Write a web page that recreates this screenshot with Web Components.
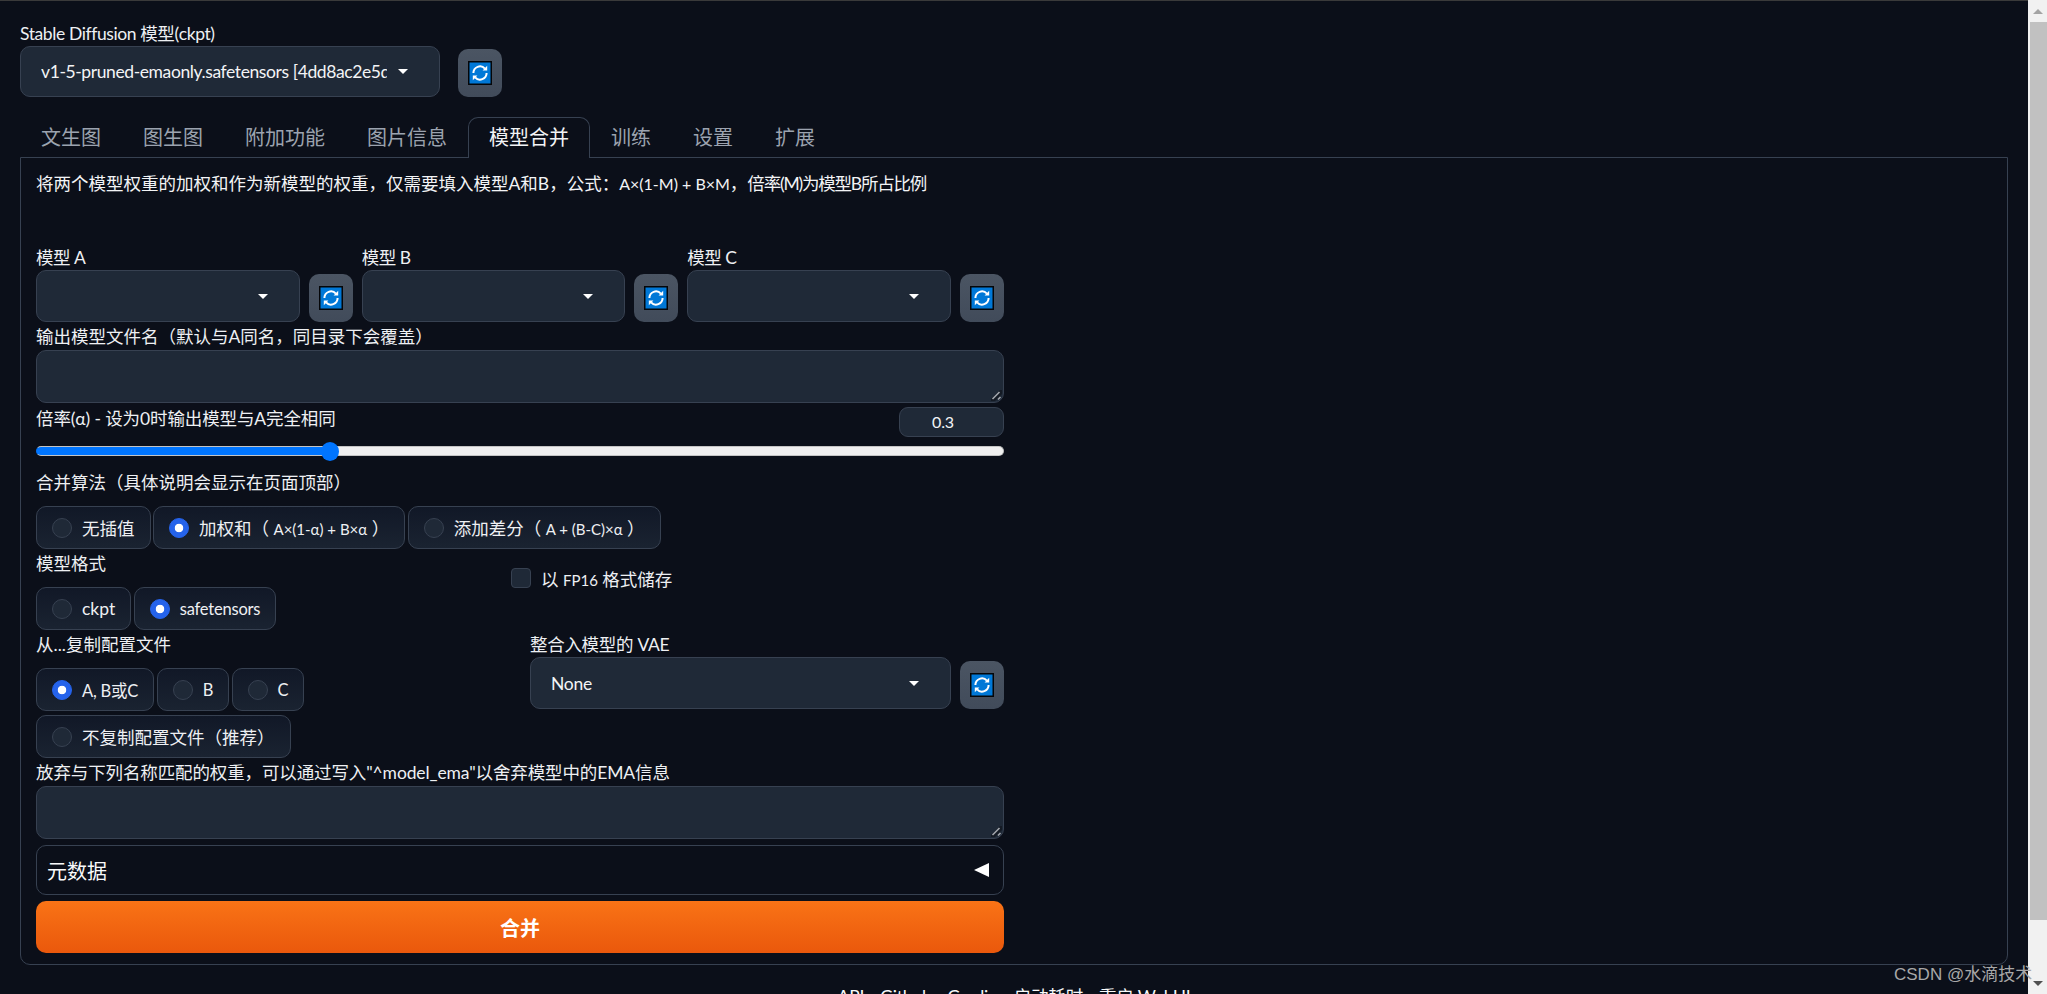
<!DOCTYPE html>
<html lang="zh">
<head>
<meta charset="utf-8">
<title>Stable Diffusion WebUI</title>
<style>
html, body { margin: 0; height: 100%; overflow: hidden; background: #0b0f19; }
body {
    font-family: Lato, "Noto Sans CJK SC", sans-serif;
    font-size: 17.5px;
    color: #eef0f3;
}
</style>
</head>
<body>
<sd-app></sd-app>

<template id="app-tpl">
    <style>
        :host { display: flex; height: 994px; overflow: hidden; position: relative; }
        main {
            flex: 1;
            min-width: 0;
            height: 994px;
            box-sizing: border-box;
            overflow: hidden;
            border-top: 1px solid #3a3a3a;
            padding: 21px 20px 0;
        }
        .top { display: flex; align-items: flex-end; gap: 18px; width: 482px; }
        .top sd-dropdown { flex: 1; min-width: 0; letter-spacing: -0.4px; }
        .desc { line-height: 24px; margin: 0 0 50px; color: #f3f4f6; white-space: nowrap; }
        .desc span { letter-spacing: -1.2px; }
        code { font: inherit; font-size: 16px; }
        .col { width: 968px; }
        .models { display: grid; grid-template-columns: repeat(3, 1fr); gap: 9px; }
        .models sd-dropdown { letter-spacing: -0.5px; }
        .field { display: flex; align-items: flex-end; gap: 9px; }
        .field sd-dropdown { flex: 1; min-width: 0; }
        .format { display: grid; grid-template-columns: 475px 1fr; }
        .format sd-checkbox { margin-top: 17px; }
        .config { display: grid; grid-template-columns: 485px 1fr; gap: 9px; }
        .vae { align-self: start; margin-top: 3px; }
        .vae sd-dropdown { letter-spacing: -0.3px; }
        .mt3 { margin-top: 3px; }
        .mt4 { margin-top: 4px; }
        .mt6 { margin-top: 6px; }
        .mt15 { margin-top: 15px; }
        .tight { letter-spacing: -0.12px; }
        sd-radio-group { margin-top: 3px; }
    </style>
    <main>
        <div class="top">
            <sd-dropdown value="v1-5-pruned-emaonly.safetensors [4dd8ac2e5d]" tall>Stable Diffusion 模型(ckpt)</sd-dropdown>
            <sd-refresh></sd-refresh>
        </div>
        <sd-tabs></sd-tabs>
        <sd-panel>
            <p class="desc">将两个模型权重的加权和作为新模型的权重，仅需要填入模型A和B，公式：<code>A×(1-M) + B×M</code>，<span>倍率(M)为模型B所占比例</span></p>
            <div class="col">
                <div class="models">
                    <div class="field"><sd-dropdown>模型 A</sd-dropdown><sd-refresh></sd-refresh></div>
                    <div class="field"><sd-dropdown>模型 B</sd-dropdown><sd-refresh></sd-refresh></div>
                    <div class="field"><sd-dropdown>模型 C</sd-dropdown><sd-refresh></sd-refresh></div>
                </div>
                <sd-textarea class="mt3">输出模型文件名（默认与A同名，同目录下会覆盖）</sd-textarea>
                <sd-slider class="mt4 tight" value="0.3">倍率(α) - 设为0时输出模型与A完全相同</sd-slider>
                <sd-radio-group class="mt15" label="合并算法（具体说明会显示在页面顶部）" options="无插值|加权和（ <small>A×(1-α) + B×α</small> ）|添加差分（ <small>A + (B-C)×α</small> ）" checked="1"></sd-radio-group>
                <div class="format">
                    <sd-radio-group label="模型格式" options="ckpt|<em>safetensors</em>" checked="1"></sd-radio-group>
                    <sd-checkbox>以 <small>FP16</small> 格式储存</sd-checkbox>
                </div>
                <div class="config">
                    <sd-radio-group label="从...复制配置文件" options="<em>A, B或C</em>|<em>B</em>|<em>C</em>|不复制配置文件（推荐）" checked="0"></sd-radio-group>
                    <div class="field vae">
                        <sd-dropdown value="None">整合入模型的 VAE</sd-dropdown><sd-refresh></sd-refresh>
                    </div>
                </div>
                <sd-textarea class="mt3 tight">放弃与下列名称匹配的权重，可以通过写入"^model_ema"以舍弃模型中的EMA信息</sd-textarea>
                <sd-accordion class="mt6">元数据</sd-accordion>
                <sd-button class="mt6">合并</sd-button>
            </div>
        </sd-panel>
        <sd-footer></sd-footer>
    </main>
    <sd-scrollbar></sd-scrollbar>
    <sd-watermark>CSDN @水滴技术</sd-watermark>
</template>

<script>
function define(name, html, init) {
    customElements.define(name, class extends HTMLElement {
        connectedCallback() {
            if (this.shadowRoot) return;
            this.attachShadow({ mode: 'open' });
            this.shadowRoot.innerHTML = html;
            if (init) init.call(this, this.shadowRoot);
        }
    });
}

const appTpl = document.getElementById('app-tpl');
customElements.define('sd-app', class extends HTMLElement {
    connectedCallback() {
        this.attachShadow({ mode: 'open' });
        this.shadowRoot.appendChild(appTpl.content.cloneNode(true));
    }
});

define('sd-dropdown', `
    <style>
        :host { display: block; }
        label { display: block; height: 24px; line-height: 24px; white-space: nowrap; }
        .box {
            height: 52px;
            box-sizing: border-box;
            display: flex;
            align-items: center;
            gap: 11px;
            padding: 0 31px 0 20px;
            background: #1f2937;
            border: 1px solid #374151;
            border-radius: 10px;
            color: #f3f4f6;
            font-size: 17.5px;
        }
        .val { flex: 1; min-width: 0; white-space: nowrap; overflow: hidden; }
        .arrow { width: 0; height: 0; border: 5.5px solid transparent; border-top: 5.5px solid #fff; border-bottom: 0; flex: none; }
    </style>
    <label><slot></slot></label>
    <div class="box"><span class="val"></span><span class="arrow"></span></div>
`, function (root) {
    root.querySelector('.val').textContent = this.getAttribute('value') || '';
    if (this.hasAttribute('tall')) root.querySelector('.box').style.height = '51px';
});

define('sd-refresh', `
    <style>
        :host {
            display: flex;
            flex: none;
            align-items: center;
            justify-content: center;
            width: 44px;
            height: 48px;
            border-radius: 10px;
            background: linear-gradient(to bottom, #4b5563, #414b5a);
        }
        svg { display: block; }
    </style>
    <svg width="24" height="24" viewBox="0 0 24 24">
        <rect x="0.75" y="0.75" width="22.5" height="22.5" fill="#0078d7" stroke="#050608" stroke-width="1.5"/>
        <g fill="none" stroke="#fff" stroke-width="2">
            <path d="M5.4 12A6.6 6.6 0 0 1 16.9 7.6"/>
            <path d="M18.6 12A6.6 6.6 0 0 1 7.1 16.4"/>
        </g>
        <path d="M14.6 9.4h4.6V4.8z" fill="#fff"/>
        <path d="M9.4 14.6H4.8v4.6z" fill="#fff"/>
    </svg>
`);

define('sd-tabs', `
    <style>
        :host { display: flex; height: 40px; margin-top: 20px; font-size: 20px; color: #9ca3af; position: relative; z-index: 1; }
        span {
            box-sizing: border-box;
            height: 41px;
            line-height: 38px;
            padding: 0 20px;
            border: 1px solid transparent;
            border-bottom: 0;
            white-space: nowrap;
        }
        .on {
            color: #f3f4f6;
            background: #0b0f19;
            border-color: #374151;
            border-radius: 10px 10px 0 0;
        }
    </style>
    <span>文生图</span><span>图生图</span><span>附加功能</span><span>图片信息</span><span class="on">模型合并</span><span>训练</span><span>设置</span><span>扩展</span>
`);

define('sd-panel', `
    <style>
        :host {
            display: block;
            box-sizing: border-box;
            height: 808px;
            padding: 14px 15px 11px;
            border: 1px solid #374151;
            border-radius: 0 0 10px 10px;
        }
    </style>
    <slot></slot>
`);

define('sd-textarea', `
    <style>
        :host { display: block; }
        label { display: block; height: 24px; line-height: 24px; white-space: nowrap; margin-bottom: 1px; }
        .wrap { position: relative; }
        textarea {
            display: block;
            width: 100%;
            height: 53px;
            box-sizing: border-box;
            margin: 0;
            background: #1f2937;
            border: 1px solid #374151;
            border-radius: 10px;
            resize: none;
            outline: none;
        }
        /* drag corner lies over the field */
        svg { position: absolute; right: 2px; bottom: 2px; }
    </style>
    <label><slot></slot></label>
    <div class="wrap">
        <textarea></textarea>
        <svg width="11" height="11" viewBox="0 0 11 11">
            <path d="M0 9 9 0h2v4L4 11H0z" fill="#141a24"/>
            <path d="M1.5 9 8.5 2" stroke="#a3a7ad" stroke-width="1.6"/>
            <path d="M7 9.5 9.5 7" stroke="#a3a7ad" stroke-width="1.6"/>
        </svg>
    </div>
`);

define('sd-slider', `
    <style>
        :host { display: block; }
        .head { display: flex; justify-content: space-between; height: 30px; }
        label { line-height: 24px; white-space: nowrap; }
        .num {
            width: 105px;
            height: 30px;
            box-sizing: border-box;
            padding-left: 32px;
            line-height: 28px;
            font-size: 16px;
            background: #1f2937;
            border: 1px solid #374151;
            border-radius: 9px;
            color: #f3f4f6;
        }
        input {
            display: block;
            -webkit-appearance: none;
            appearance: none;
            width: 100%;
            height: 10px;
            box-sizing: border-box;
            margin: 9px 0 0;
            border: 1px solid #c4c4c4;
            border-left-color: #0075ff;
            border-radius: 5px;
            background: linear-gradient(to right, #0075ff 30.4%, #efefef 30.4%);
        }
        input::-webkit-slider-thumb {
            -webkit-appearance: none;
            width: 18px;
            height: 19px;
            border-radius: 50%;
            background: #0075ff;
        }
    </style>
    <div class="head"><label><slot></slot></label><div class="num"></div></div>
    <input type="range" min="0" max="1" step="0.05">
`, function (root) {
    const v = this.getAttribute('value');
    root.querySelector('.num').textContent = v;
    root.querySelector('input').value = v;
});

define('sd-radio-group', `
    <style>
        :host { display: block; }
        label { display: block; height: 24px; line-height: 24px; margin-bottom: 11px; white-space: nowrap; }
        .items { display: flex; flex-wrap: wrap; gap: 4px 2.5px; }
        .item {
            display: flex;
            align-items: center;
            gap: 10px;
            height: 43px;
            box-sizing: border-box;
            padding: 0 15px;
            border: 1px solid #374151;
            border-radius: 10px;
            background: linear-gradient(to bottom, #111827, #1a2331);
            white-space: nowrap;
        }
        i {
            display: block;
            flex: none;
            width: 20px;
            height: 20px;
            box-sizing: border-box;
            border-radius: 50%;
            background: #1f2937;
            border: 1px solid #374151;
        }
        .on i { background: #2563eb radial-gradient(circle, #fff 0 4px, transparent 4.6px); border-color: #2563eb; }
        small { font-size: 15px; }
        em { font-style: normal; font-size: 16.5px; letter-spacing: -0.2px; }
    </style>
    <label></label>
    <div class="items"></div>
`, function (root) {
    root.querySelector('label').textContent = this.getAttribute('label');
    const checked = Number(this.getAttribute('checked'));
    root.querySelector('.items').innerHTML = this.getAttribute('options').split('|').map((o, i) =>
        `<div class="item${i === checked ? ' on' : ''}"><i></i><span>${o}</span></div>`).join('');
});

define('sd-checkbox', `
    <style>
        :host { display: flex; align-items: center; gap: 10px; height: 24px; white-space: nowrap; }
        i {
            display: block;
            width: 20px;
            height: 20px;
            box-sizing: border-box;
            background: #1f2937;
            border: 1px solid #374151;
            border-radius: 4px;
        }
        ::slotted(small) { font-size: 15px; }
    </style>
    <i></i><span><slot></slot></span>
`);

define('sd-accordion', `
    <style>
        :host {
            display: flex;
            align-items: center;
            justify-content: space-between;
            height: 50px;
            box-sizing: border-box;
            padding: 0 14px 0 10px;
            border: 1px solid #374151;
            border-radius: 10px;
            font-size: 20px;
            color: #f9fafb;
        }
        b { width: 15px; height: 14px; background: #fff; clip-path: polygon(0 50%, 100% 0, 100% 100%); }
    </style>
    <span><slot></slot></span><b></b>
`);

define('sd-button', `
    <style>
        :host {
            display: flex;
            align-items: center;
            justify-content: center;
            height: 52px;
            border-radius: 10px;
            background: linear-gradient(to bottom, #f97316, #ea580c);
            color: #fff;
            font-size: 20px;
            font-weight: 700;
        }
    </style>
    <slot></slot>
`);

define('sd-footer', `
    <style>
        :host { display: block; margin-top: 20px; text-align: center; line-height: 24px; color: #f9fafb; white-space: nowrap; letter-spacing: -0.2px; }
        span { margin: 0 3px; }
    </style>
    <span>API</span>•<span>Github</span>•<span>Gradio</span>•<span>启动耗时</span>•<span>重启 WebUI</span>
`);

define('sd-scrollbar', `
    <style>
        :host { display: flex; flex-direction: column; flex: none; width: 19px; height: 994px; background: #f1f1f1; position: relative; z-index: 2; }
        .up, .down { flex: none; height: 22px; display: flex; align-items: center; justify-content: center; }
        .up b, .down b { width: 0; height: 0; border: 5px solid transparent; }
        .up b { border-bottom: 5px solid #a3a3a3; border-top: 0; }
        .down b { border-top: 5px solid #505050; border-bottom: 0; }
        .track { flex: 1; padding-left: 2px; }
        .thumb { height: 898px; background: #c1c1c1; }
    </style>
    <div class="up"><b></b></div>
    <div class="track"><div class="thumb"></div></div>
    <div class="down"><b></b></div>
`);

define('sd-watermark', `
    <style>
        :host {
            position: absolute;
            left: 1894px;
            top: 964px;
            z-index: 3;
            font-family: "Liberation Sans", "Noto Sans CJK SC", sans-serif;
            font-size: 17px;
            line-height: 22px;
            color: #a8a8a8;
            white-space: nowrap;
        }
    </style>
    <slot></slot>
`);
</script>
</body>
</html>
